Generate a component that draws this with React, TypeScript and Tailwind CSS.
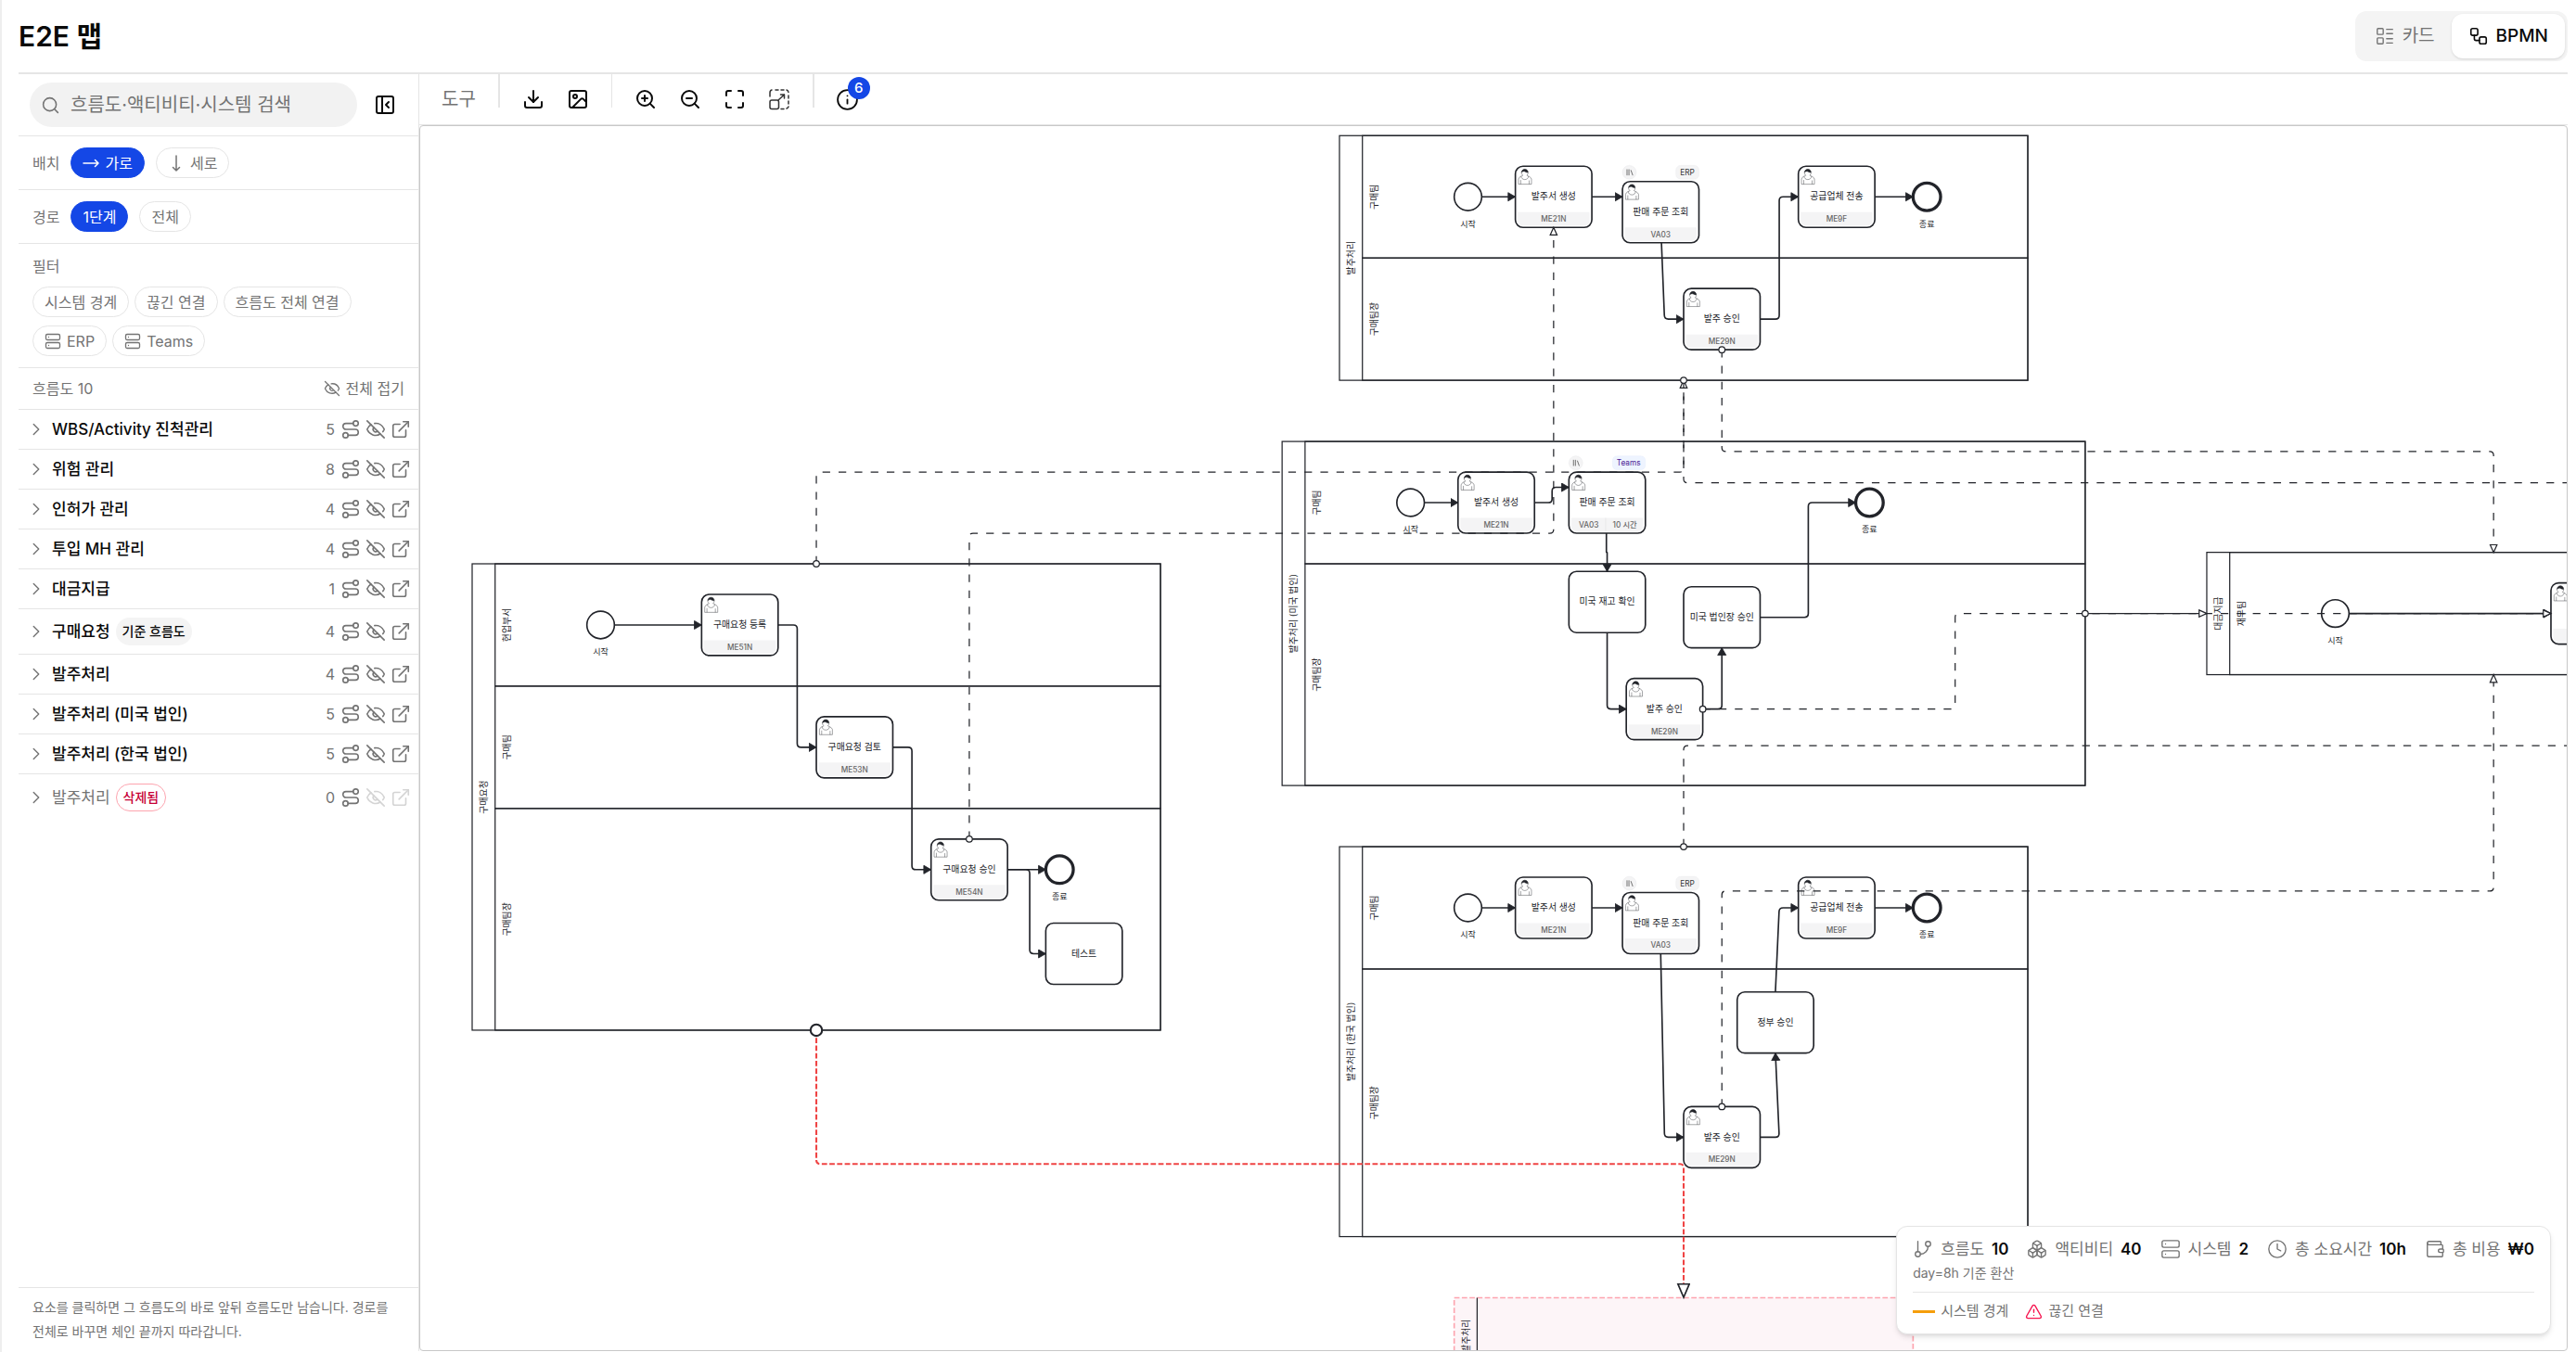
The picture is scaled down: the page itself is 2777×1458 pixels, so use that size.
import React, { useState } from "react";
import {
  Boxes,
  ChevronRight,
  Clock,
  Download,
  ExternalLink,
  EyeOff,
  GitBranch,
  Image as ImageIcon,
  Info,
  LayoutList,
  Maximize,
  PanelLeftClose,
  Route,
  Search,
  Server,
  TriangleAlert,
  Wallet,
  Workflow,
  ZoomIn,
  ZoomOut,
} from "lucide-react";

type Point = [number, number];

interface Flow {
  name: string;
  count: number;
  badge?: string;
  deleted?: boolean;
}

interface Task {
  x: number;
  y: number;
  label?: string;
  code?: string;
  time?: string;
  system?: "ERP" | "Teams";
  user?: boolean;
}

interface Pool {
  x: number;
  y: number;
  w: number;
  label: string;
  lanes: { h: number; label: string }[];
}

const INK = "#22242a";

const flows: Flow[] = [
  { name: "WBS/Activity 진척관리", count: 5 },
  { name: "위험 관리", count: 8 },
  { name: "인허가 관리", count: 4 },
  { name: "투입 MH 관리", count: 4 },
  { name: "대금지급", count: 1 },
  { name: "구매요청", count: 4, badge: "기준 흐름도" },
  { name: "발주처리", count: 4 },
  { name: "발주처리 (미국 법인)", count: 5 },
  { name: "발주처리 (한국 법인)", count: 5 },
  { name: "발주처리", count: 0, badge: "삭제됨", deleted: true },
];

// diagram data, in bpmn units
const pools: Pool[] = [
  { x: 0, y: 0, w: 900, label: "구매요청", lanes: [{ h: 160, label: "현업부서" }, { h: 160, label: "구매팀" }, { h: 290, label: "구매팀장" }] },
  { x: 1134, y: -560, w: 900, label: "발주처리", lanes: [{ h: 160, label: "구매팀" }, { h: 160, label: "구매팀장" }] },
  { x: 1059, y: -160, w: 1050, label: "발주처리 (미국 법인)", lanes: [{ h: 160, label: "구매팀" }, { h: 290, label: "구매팀장" }] },
  { x: 1134, y: 370, w: 900, label: "발주처리 (한국 법인)", lanes: [{ h: 160, label: "구매팀" }, { h: 350, label: "구매팀장" }] },
  { x: 2268, y: -15, w: 750, label: "대금지급", lanes: [{ h: 160, label: "재무팀" }] },
];

const tasks: Task[] = [
  { x: 300, y: 40, label: "구매요청 등록", code: "ME51N", user: true },
  { x: 450, y: 200, label: "구매요청 검토", code: "ME53N", user: true },
  { x: 600, y: 360, label: "구매요청 승인", code: "ME54N", user: true },
  { x: 750, y: 470, label: "테스트" },

  { x: 1364, y: -520, label: "발주서 생성", code: "ME21N", user: true },
  { x: 1504, y: -500, label: "판매 주문 조회", code: "VA03", system: "ERP", user: true },
  { x: 1584, y: -360, label: "발주 승인", code: "ME29N", user: true },
  { x: 1734, y: -520, label: "공급업체 전송", code: "ME9F", user: true },

  { x: 1289, y: -120, label: "발주서 생성", code: "ME21N", user: true },
  { x: 1434, y: -120, label: "판매 주문 조회", code: "VA03", time: "10 시간", system: "Teams", user: true },
  { x: 1434, y: 10, label: "미국 재고 확인" },
  { x: 1584, y: 30, label: "미국 법인장 승인" },
  { x: 1509, y: 150, label: "발주 승인", code: "ME29N", user: true },

  { x: 1364, y: 410, label: "발주서 생성", code: "ME21N", user: true },
  { x: 1504, y: 430, label: "판매 주문 조회", code: "VA03", system: "ERP", user: true },
  { x: 1734, y: 410, label: "공급업체 전송", code: "ME9F", user: true },
  { x: 1654, y: 560, label: "정부 승인" },
  { x: 1584, y: 710, label: "발주 승인", code: "ME29N", user: true },

  { x: 2718, y: 25, user: true },
];

const starts: Point[] = [[168, 80], [1302, -480], [1227, -80], [1302, 450], [2436, 65]];
const ends: Point[] = [[768, 400], [1902, -480], [1827, -80], [1902, 450]];

const sequences: Point[][] = [
  [[186, 80], [300, 80]],
  [[400, 80], [425, 80], [425, 240], [450, 240]],
  [[550, 240], [575, 240], [575, 400], [600, 400]],
  [[700, 400], [750, 400]],
  [[700, 400], [729, 400], [729, 510], [750, 510]],

  [[1320, -480], [1364, -480]],
  [[1464, -480], [1504, -480]],
  [[1555, -420], [1559, -320], [1584, -320]],
  [[1684, -320], [1709, -320], [1709, -480], [1734, -480]],
  [[1834, -480], [1884, -480]],

  [[1245, -80], [1289, -80]],
  [[1389, -80], [1412, -80], [1412, -100], [1434, -100]],
  [[1483, -40], [1483, -15], [1484, -15], [1484, 10]],
  [[1484, 90], [1484, 190], [1509, 190]],
  [[1609, 190], [1634, 190], [1634, 110]],
  [[1684, 70], [1747, 70], [1747, -80], [1809, -80]],

  [[1320, 450], [1364, 450]],
  [[1464, 450], [1504, 450]],
  [[1554, 510], [1559, 750], [1584, 750]],
  [[1684, 750], [1709, 750], [1704, 640]],
  [[1704, 560], [1709, 450], [1734, 450]],
  [[1834, 450], [1884, 450]],
  [[2454, 65], [2718, 65]],
];

const messages: Point[][] = [
  [[450, 0], [450, -120], [1584, -120], [1584, -240]],
  [[650, 360], [650, -40], [1414, -40], [1414, -440]],
  [[1584, -240], [1584, -106], [3118, -106]],
  [[1634, -280], [1634, -147], [2643, -147], [2643, -15]],
  [[1609, 190], [1939, 190], [1939, 65], [2718, 65]],
  [[2109, 65], [2268, 65]],
  [[1584, 370], [1584, 238], [3118, 238]],
  [[1634, 710], [1634, 428], [2643, 428], [2643, 145]],
];

// polyline with softened corners
const toPath = (points: Point[], radius = 5): string => {
  let d = `M${points[0][0]},${points[0][1]}`;
  for (let i = 1; i < points.length - 1; i++) {
    const [px, py] = points[i - 1];
    const [cx, cy] = points[i];
    const [nx, ny] = points[i + 1];
    const before = Math.hypot(cx - px, cy - py);
    const after = Math.hypot(nx - cx, ny - cy);
    const r = Math.min(radius, before / 2, after / 2);
    const ax = cx - ((cx - px) / before) * r;
    const ay = cy - ((cy - py) / before) * r;
    const bx = cx + ((nx - cx) / after) * r;
    const by = cy + ((ny - cy) / after) * r;
    d += `L${ax},${ay}Q${cx},${cy} ${bx},${by}`;
  }
  const last = points[points.length - 1];
  return `${d}L${last[0]},${last[1]}`;
};

const Label = ({ x, y, size = 12, fill = INK, weight, vertical, children }: any) => (
  <text
    x={x}
    y={y}
    fontSize={size}
    fill={fill}
    fontWeight={weight}
    textAnchor="middle"
    dominantBaseline="central"
    transform={vertical ? `rotate(-90 ${x} ${y})` : undefined}
  >
    {children}
  </text>
);

const UserMark = () => (
  <g stroke={INK} strokeWidth={0.5}>
    <path
      fill="#fff"
      d="m 15,12 c 0.909,-0.845 1.594,-2.049 1.594,-3.385 0,-2.554 -1.805,-4.622 -4.357,-4.622 -2.552,0 -4.288,2.068 -4.288,4.622 0,1.348 0.974,2.562 1.896,3.405 -0.529,0.187 -5.669,2.097 -5.794,4.756 v 6.718 h 17 v -6.718 c 0,-2.298 -5.528,-4.595 -6.051,-4.776 z m -8,6 l 0,5.5 m 11,0 l 0,-5"
    />
    <path fill="none" d="m 17.162,13.009 c 0,2.447 -2.158,4.431 -4.821,4.431 -2.665,0 -4.822,-1.981 -4.822,-4.431" />
    <path
      fill={INK}
      d="m 8.1,8.2 c 0,0 2.251,-2.358 4.274,-1.177 2.024,1.181 4.221,1.537 4.124,0.965 -0.098,-0.57 -0.117,-3.791 -4.191,-4.136 -3.572,0.001 -4.208,3.673 -4.207,4.348 z"
    />
  </g>
);

const TaskShape = ({ task }: { task: Task }) => (
  <g transform={`translate(${task.x} ${task.y})`}>
    <rect width={100} height={80} rx={10} fill="#fff" stroke={INK} strokeWidth={2} />
    {task.user && (
      <>
        <path d="M3 60H97V71Q97 77.500 90 77.500H10Q3 77.500 3 71Z" fill="#f4f4f5" />
        <UserMark />
      </>
    )}
    {task.code && <Label x={task.time ? 26 : 50} y={69} size={10} fill="#666" weight={500}>{task.code}</Label>}
    {task.time && (
      <>
        <path d="M48 60V78" stroke="#e5e5e5" />
        <Label x={73} y={69} size={10} fill="#666" weight={500}>{task.time}</Label>
      </>
    )}
    {task.label && <Label x={50} y={39}>{task.label}</Label>}
    {task.system && (
      <>
        <circle cx={9} cy={-12} r={9} fill="#f4f4f5" stroke="#e4e4e7" strokeWidth={0.5} />
        <path d="M6 -16V-8M8.500 -16V-8M11 -15L13.500 -8" stroke="#555" fill="none" />
        {task.system === "ERP" ? (
          <>
            <rect x={70} y={-21} width={30} height={18} rx={6} fill="#f4f4f5" stroke="#e9e9eb" strokeWidth={0.5} />
            <Label x={85} y={-12} size={10} fill="#333">ERP</Label>
          </>
        ) : (
          <>
            <rect x={57} y={-21} width={43} height={18} rx={6} fill="#eef4ff" stroke="#e3ebfa" strokeWidth={0.5} />
            <Label x={78} y={-12} size={10} fill="#4c1d95">Teams</Label>
          </>
        )}
      </>
    )}
  </g>
);

const PoolShape = ({ pool }: { pool: Pool }) => {
  const height = pool.lanes.reduce((sum, lane) => sum + lane.h, 0);
  let top = pool.y;
  return (
    <g>
      <rect x={pool.x} y={pool.y} width={pool.w} height={height} fill="#fff" stroke={INK} strokeWidth={1.5} />
      <Label x={pool.x + 15} y={pool.y + height / 2} vertical>{pool.label}</Label>
      {pool.lanes.map((lane) => {
        const y = top;
        top += lane.h;
        return (
          <g key={lane.label}>
            <rect x={pool.x + 30} y={y} width={pool.w - 30} height={lane.h} fill="none" stroke={INK} strokeWidth={1.5} />
            <Label x={pool.x + 45} y={y + lane.h / 2} vertical>{lane.label}</Label>
          </g>
        );
      })}
    </g>
  );
};

const Diagram = () => (
  <svg className="absolute inset-0 h-full w-full" role="img" aria-label="BPMN">
    <defs>
      <marker id="seq-end" markerUnits="userSpaceOnUse" markerWidth={14} markerHeight={14} refX={10} refY={6} orient="auto">
        <path d="M0.500 0.500L10 6L0.500 11.500Z" fill={INK} stroke={INK} strokeLinejoin="round" />
      </marker>
      <marker id="msg-end" markerUnits="userSpaceOnUse" markerWidth={14} markerHeight={14} refX={11} refY={6} orient="auto">
        <path d="M1 1.500L11 6L1 10.500Z" fill="#fff" stroke={INK} strokeWidth={1.5} />
      </marker>
      <marker id="msg-start" markerUnits="userSpaceOnUse" markerWidth={12} markerHeight={12} refX={6} refY={6} orient="auto">
        <circle cx={6} cy={6} r={4} fill="#fff" stroke={INK} strokeWidth={1.5} />
      </marker>
      <marker id="broken-end" markerUnits="userSpaceOnUse" markerWidth={22} markerHeight={20} refX={19} refY={9} orient="auto">
        <path d="M1 1.500L18.500 9L1 16.500Z" fill="#fff" stroke={INK} strokeWidth={2} />
      </marker>
      <marker id="broken-start" markerUnits="userSpaceOnUse" markerWidth={20} markerHeight={20} refX={10} refY={10} orient="auto">
        <circle cx={10} cy={10} r={7.5} fill="#fff" stroke={INK} strokeWidth={2.5} />
      </marker>
    </defs>
    <g transform="translate(56 472) scale(0.8245)">
      {pools.map((pool) => (
        <PoolShape key={pool.label} pool={pool} />
      ))}
      <rect x={1284} y={960} width={600} height={100} fill="#fdf5f8" stroke="#fda4af" strokeWidth={2} strokeDasharray="7 3" />
      <path d="M1314 960V1060" stroke={INK} strokeWidth={1.5} />
      <Label x={1299} y={1010} vertical>발주처리</Label>
      {starts.map(([x, y]) => (
        <g key={`${x}${y}`}>
          <circle cx={x} cy={y} r={18} fill="#fff" stroke={INK} strokeWidth={2} />
          <Label x={x} y={y + 35} size={11}>시작</Label>
        </g>
      ))}
      {ends.map(([x, y]) => (
        <g key={`${x}${y}`}>
          <circle cx={x} cy={y} r={18} fill="#fff" stroke={INK} strokeWidth={4} />
          <Label x={x} y={y + 35} size={11}>종료</Label>
        </g>
      ))}
      {tasks.map((task) => (
        <TaskShape key={`${task.x}${task.y}`} task={task} />
      ))}
      {sequences.map((points, i) => (
        <path key={i} d={toPath(points)} fill="none" stroke={INK} strokeWidth={2} markerEnd="url(#seq-end)" />
      ))}
      {messages.map((points, i) => (
        <path
          key={i}
          d={toPath(points)}
          fill="none"
          stroke={INK}
          strokeWidth={1.5}
          strokeDasharray={i === 5 ? undefined : "10 11"}
          markerStart="url(#msg-start)"
          markerEnd="url(#msg-end)"
        />
      ))}
      <path
        d={toPath([[450, 610], [450, 785], [1584, 785], [1584, 960]])}
        fill="none"
        stroke="#ef4444"
        strokeWidth={2.5}
        strokeDasharray="7 3"
        markerStart="url(#broken-start)"
        markerEnd="url(#broken-end)"
      />
    </g>
  </svg>
);

const FitSelection = () => (
  <svg width={28} height={28} viewBox="0 0 28 28" fill="none" stroke="#333" strokeWidth={1.5} strokeLinecap="round" strokeLinejoin="round">
    <path d="M4 11V7a3 3 0 0 1 2-3M10 4h3M16 4h3M22 4a3 3 0 0 1 2 2.500M24 10v3M24 16v3M24 22a3 3 0 0 1-2 2M19 24.500h-3" />
    <rect x={4} y={15} width={9.500} height={9.500} rx={2} />
    <path d="M13 15L19.500 9M15.500 9H19.500V13" />
  </svg>
);

const LongArrow = ({ down = false }: { down?: boolean }) => (
  <svg width={18} height={18} viewBox="0 0 18 18" fill="none" stroke="currentColor" strokeWidth={1.5} strokeLinecap="round" strokeLinejoin="round">
    {down ? <path d="M9 1V17M5.500 13.500L9 17L12.500 13.500" /> : <path d="M1 9H17M13.500 5.500L17 9L13.500 12.500" />}
  </svg>
);

const Chip = ({ active = false, onClick, children }: any) => (
  <button
    type="button"
    onClick={onClick}
    aria-pressed={active}
    className={`flex h-[33px] items-center gap-1.5 rounded-full border px-3 text-base leading-5 ${
      active ? "border-[#1447e6] bg-[#1447e6] text-white" : "border-[#e5e5e5] bg-white text-[#737373]"
    }`}
  >
    {children}
  </button>
);

const ToolButton = ({ label, children }: any) => (
  <button type="button" aria-label={label} className="relative flex h-12 w-12 items-center justify-center">
    {children}
  </button>
);

const Stat = ({ icon: Icon, label, value }: any) => (
  <div className="flex items-center gap-2">
    <Icon size={22} strokeWidth={1.5} />
    <span>{label}</span>
    <span className="font-semibold text-[#0a0a0a]">{value}</span>
  </div>
);

const App = () => {
  const [layout, setLayout] = useState("가로");
  const [depth, setDepth] = useState("1단계");
  const [query, setQuery] = useState("");

  const visible = flows.filter((flow) => flow.name.includes(query));

  return (
    <div className="flex h-screen flex-col border-l-2 border-[#eeeeee] bg-white pr-[9px] pb-px pl-[18px] font-[Inter,'Noto_Sans_CJK_KR',sans-serif] text-[#0a0a0a]">
      <header className="flex h-20 shrink-0 items-center justify-between border-b-2 border-[#e5e5e5]">
        <h1 className="text-[30px] leading-9 font-semibold">E2E 맵</h1>
        <div className="flex rounded-xl bg-[#f4f4f4] p-[3px] text-[19px]">
          <button type="button" className="flex h-12 items-center gap-2 px-[18px] text-[#737373]">
            <LayoutList size={22} strokeWidth={1.5} />
            카드
          </button>
          <button type="button" className="flex h-12 items-center gap-2 rounded-xl bg-white px-[18px] font-medium shadow">
            <Workflow size={22} strokeWidth={1.75} />
            BPMN
          </button>
        </div>
      </header>

      <div className="flex min-h-0 flex-1">
        <aside className="flex w-[432px] shrink-0 flex-col border-r border-[#e5e5e5] text-base text-[#737373]">
          <div className="flex items-center justify-between border-b border-[#e5e5e5] py-[9px] pr-3 pl-3">
            <label className="flex h-12 w-[353px] items-center gap-[11px] rounded-full bg-[#f2f2f2] px-3">
              <Search size={21} strokeWidth={1.75} />
              <input
                type="text"
                aria-label="검색"
                value={query}
                onChange={(e) => setQuery(e.target.value)}
                placeholder="흐름도·액티비티·시스템 검색"
                className="min-w-0 flex-1 bg-transparent text-xl text-[#0a0a0a] outline-none placeholder:text-[#737373]"
              />
            </label>
            <button type="button" aria-label="패널 접기" className="flex h-12 w-12 items-center justify-center text-[#0a0a0a]">
              <PanelLeftClose size={24} />
            </button>
          </div>

          <div className="flex items-center gap-3 border-b border-[#e5e5e5] px-[15px] py-3">
            <span>배치</span>
            <Chip active={layout === "가로"} onClick={() => setLayout("가로")}>
              <LongArrow />
              가로
            </Chip>
            <Chip active={layout === "세로"} onClick={() => setLayout("세로")}>
              <LongArrow down />
              세로
            </Chip>
          </div>

          <div className="flex items-center gap-3 border-b border-[#e5e5e5] px-[15px] py-3">
            <span>경로</span>
            <Chip active={depth === "1단계"} onClick={() => setDepth("1단계")}>1단계</Chip>
            <Chip active={depth === "전체"} onClick={() => setDepth("전체")}>전체</Chip>
          </div>

          <div className="border-b border-[#e5e5e5] px-[15px] py-3">
            <p className="leading-6">필터</p>
            <div className="mt-2.5 flex flex-wrap gap-x-1.5 gap-y-[9px]">
              <Chip>시스템 경계</Chip>
              <Chip>끊긴 연결</Chip>
              <Chip>흐름도 전체 연결</Chip>
              <Chip>
                <Server size={18} strokeWidth={1.75} />
                ERP
              </Chip>
              <Chip>
                <Server size={18} strokeWidth={1.75} />
                Teams
              </Chip>
            </div>
          </div>

          <div className="flex h-[45px] shrink-0 items-center justify-between border-b border-[#e5e5e5] px-[15px]">
            <span>흐름도 10</span>
            <button type="button" className="flex items-center gap-1.5">
              <EyeOff size={18} strokeWidth={1.75} />
              전체 접기
            </button>
          </div>

          <ul className="min-h-0 flex-1 overflow-hidden">
            {visible.map((flow, i) => (
              <li
                key={i}
                className={`flex items-center pr-2 pl-2 ${flow.badge ? "h-[49px]" : "h-[43px]"} ${
                  i < visible.length - 1 ? "border-b border-[#e5e5e5]" : ""
                }`}
              >
                <button type="button" aria-label="펼치기" className="flex w-[22px] justify-center">
                  <ChevronRight size={22} strokeWidth={1.5} />
                </button>
                <span className={`ml-1.5 text-[17px] leading-6 ${flow.deleted ? "" : "font-medium text-[#0a0a0a]"}`}>{flow.name}</span>
                {flow.badge && (
                  <span
                    className={`ml-1.5 flex h-[30px] items-center rounded-full px-[7px] text-sm font-medium ${
                      flow.deleted ? "border border-[#fda4af] text-[#c70036]" : "bg-[#f4f4f4] text-[#0a0a0a]"
                    }`}
                  >
                    {flow.badge}
                  </span>
                )}
                <span className="ml-auto">{flow.count}</span>
                <span className="ml-1.5 flex gap-[5px]">
                  <button type="button" aria-label="경로 보기">
                    <Route size={22} strokeWidth={1.75} />
                  </button>
                  <button type="button" aria-label="숨기기" disabled={flow.deleted} className="disabled:opacity-30">
                    <EyeOff size={22} strokeWidth={1.75} />
                  </button>
                  <button type="button" aria-label="열기" disabled={flow.deleted} className="disabled:opacity-30">
                    <ExternalLink size={22} strokeWidth={1.75} />
                  </button>
                </span>
              </li>
            ))}
          </ul>

          <p className="border-t border-[#e5e5e5] py-2 pr-3 pl-[15px] text-sm leading-[26px] break-keep">
            요소를 클릭하면 그 흐름도의 바로 앞뒤 흐름도만 남습니다. 경로를 전체로 바꾸면 체인 끝까지 따라갑니다.
          </p>
        </aside>

        <main className="flex min-w-0 flex-1 flex-col">
          <div className="flex h-[55px] shrink-0 border-b border-[#e5e5e5]">
            <div className="h-9 border-r-2 border-[#e5e5e5] px-6 text-xl leading-[54px] text-[#737373]">도구</div>
            <div className="flex h-9 border-r border-[#e5e5e5] px-3 pt-[3px]">
              <ToolButton label="다운로드"><Download size={24} /></ToolButton>
              <ToolButton label="이미지 저장"><ImageIcon size={24} /></ToolButton>
            </div>
            <div className="flex h-9 border-r-2 border-[#e5e5e5] px-3 pt-[3px]">
              <ToolButton label="확대"><ZoomIn size={24} /></ToolButton>
              <ToolButton label="축소"><ZoomOut size={24} /></ToolButton>
              <ToolButton label="전체 화면"><Maximize size={24} /></ToolButton>
              <ToolButton label="선택 맞춤"><FitSelection /></ToolButton>
            </div>
            <div className="flex h-9 px-3 pt-[3px]">
              <ToolButton label="알림">
                <Info size={25} strokeWidth={1.75} />
                <span className="absolute top-0 right-0 flex h-6 w-6 items-center justify-center rounded-full bg-[#1447e6] text-[15px] font-medium text-white">
                  6
                </span>
              </ToolButton>
            </div>
          </div>

          <div className="relative min-h-0 flex-1 overflow-hidden rounded border border-[#c8c8c8]">
            <Diagram />
            <section className="absolute right-[17px] bottom-[17px] rounded-xl border border-[#e5e5e5] bg-white px-[17px] pt-2.5 pb-3 text-[#737373] shadow-md">
              <div className="flex gap-5 text-[17px] leading-7">
                <Stat icon={GitBranch} label="흐름도" value="10" />
                <Stat icon={Boxes} label="액티비티" value="40" />
                <Stat icon={Server} label="시스템" value="2" />
                <Stat icon={Clock} label="총 소요시간" value="10h" />
                <Stat icon={Wallet} label="총 비용" value="₩0" />
              </div>
              <p className="text-sm leading-6">day=8h 기준 환산</p>
              <div className="mt-2 flex items-center gap-[18px] border-t border-[#e5e5e5] pt-2 text-[15px] leading-6">
                <span className="flex items-center gap-1.5">
                  <span className="h-[3px] w-6 bg-[#f59e0b]" />
                  시스템 경계
                </span>
                <span className="flex items-center gap-1.5">
                  <TriangleAlert size={19} strokeWidth={1.75} className="text-[#f6144f]" />
                  끊긴 연결
                </span>
              </div>
            </section>
          </div>
        </main>
      </div>
    </div>
  );
};

export default App;
